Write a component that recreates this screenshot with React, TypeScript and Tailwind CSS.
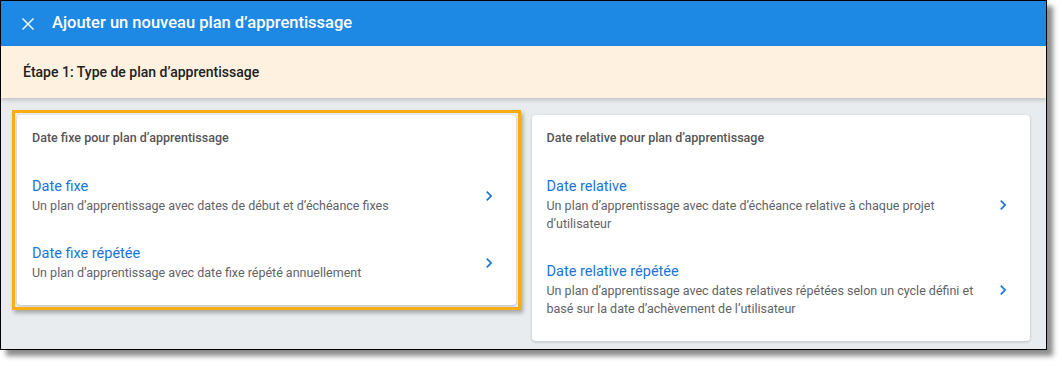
import { X } from 'lucide-react'

const font = { fontFamily: 'Roboto, "Noto Sans", Arial, sans-serif' }

type Option = { title: string; desc: string }

const fixedOptions: Option[] = [
  { title: 'Date fixe', desc: 'Un plan d’apprentissage avec dates de début et d’échéance fixes' },
  { title: 'Date fixe répétée', desc: 'Un plan d’apprentissage avec date fixe répété annuellement' },
]

const relativeOptions: Option[] = [
  { title: 'Date relative', desc: 'Un plan d’apprentissage avec date d’échéance relative à chaque projet d’utilisateur' },
  {
    title: 'Date relative répétée',
    desc: 'Un plan d’apprentissage avec dates relatives répétées selon un cycle défini et basé sur la date d’achèvement de l’utilisateur',
  },
]

export default function App() {
  return (
    <div className="w-[1062px] h-[366px] bg-white" style={font}>
      <div className="w-[1047px] h-[350px] border border-black flex flex-col overflow-hidden shadow-[6px_6px_5px_rgba(0,0,0,0.45)]">
        {/* header */}
        <div className="h-[45px] bg-[#1e88e5] flex items-center pl-[17px] text-white shrink-0">
          <X size={20} strokeWidth={2} className="text-white/90" />
          <h1 className="ml-[14px] text-[16.5px] font-medium leading-none">Ajouter un nouveau plan d’apprentissage</h1>
        </div>

        {/* step band */}
        <div className="relative z-10 h-[52px] bg-[#fff1e0] flex items-center px-[22px] shrink-0 shadow-[0_2px_4px_rgba(0,0,0,0.18)]">
          <p className="text-[14px] font-medium text-[#212121]">Étape 1: Type de plan d’apprentissage</p>
        </div>

        {/* body */}
        <div className="flex-1 bg-[#e9ecef] px-[16px] pt-[17px]">
          <div className="grid grid-cols-2 gap-[16px] items-start">
            <div className="relative">
              <span className="absolute -inset-[5px] border-[3px] border-[#f8ad13] shadow-[2px_3px_4px_rgba(0,0,0,0.3)] pointer-events-none" />
              <Card heading="Date fixe pour plan d’apprentissage" options={fixedOptions} />
            </div>
            <Card heading="Date relative pour plan d’apprentissage" options={relativeOptions} />
          </div>
        </div>
      </div>
    </div>
  )
}

function Card({ heading, options }: { heading: string; options: Option[] }) {
  return (
    <div className="bg-white rounded-[4px] shadow-[0_1px_3px_rgba(0,0,0,0.2)] pt-[15px] pb-[8px]">
      <p className="px-[15px] text-[12.5px] leading-[16px] font-medium text-[#555]">{heading}</p>
      <div className="mt-[17px]">
        {options.map((o) => (
          <div key={o.title} className="flex items-center pl-[15px] pr-[17px] pt-[14px] pb-[15px] cursor-pointer">
            <div className="flex-1 pr-[8px]">
              <p className="text-[14.5px] leading-[20px] text-[#1a74d8]">{o.title}</p>
              <p className="text-[12.5px] leading-[18px] text-[#5f6368]">{o.desc}</p>
            </div>
            <Chevron />
          </div>
        ))}
      </div>
    </div>
  )
}

function Chevron() {
  return (
    <svg width="20" height="20" viewBox="0 0 24 24" className="shrink-0 text-[#1976d2]" fill="currentColor">
      <path d="M10 6L8.59 7.41 13.17 12l-4.58 4.59L10 18l6-6z" />
    </svg>
  )
}
